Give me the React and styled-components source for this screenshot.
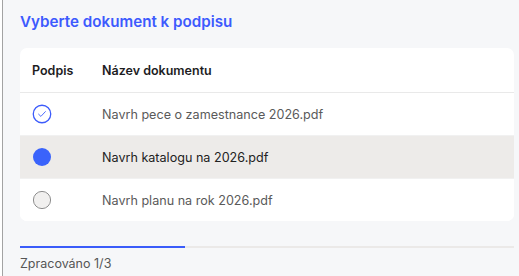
import React from 'react'
import styled, { createGlobalStyle } from 'styled-components'

const GlobalStyle = createGlobalStyle`
  html, body {
    margin: 0;
    padding: 0;
    background: #fff;
  }
  body {
    font-family: Inter, "Noto Sans", sans-serif;
  }
`

const docs = [
  { name: 'Navrh pece o zamestnance 2026.pdf', state: 'done' },
  { name: 'Navrh katalogu na 2026.pdf', state: 'active' },
  { name: 'Navrh planu na rok 2026.pdf', state: 'todo' },
]

const done = docs.filter(d => d.state === 'done').length

const StatusIcon = ({ state }) => {
  if (state === 'done') {
    return (
      <svg width="20" height="20" viewBox="0 0 20 20">
        <circle cx="10" cy="10" r="8.75" fill="#fff" stroke="#3d5cfb" strokeWidth="1.3" />
        <path d="M6.6 10.2 L8.9 12.4 L13.4 7.6" fill="none" stroke="#3d5cfb" strokeWidth="0.9" strokeLinecap="round" strokeLinejoin="round" />
      </svg>
    )
  }
  if (state === 'active') {
    return (
      <svg width="20" height="20" viewBox="0 0 20 20">
        <circle cx="10" cy="10" r="9" fill="#3a63fb" />
      </svg>
    )
  }
  return (
    <svg width="20" height="20" viewBox="0 0 20 20">
      <circle cx="10" cy="10" r="8.6" fill="#f1f0ef" stroke="#8e8e8e" strokeWidth="1" />
    </svg>
  )
}

const App = () => {
  return (
    <>
      <GlobalStyle />
      <Page>
        <Panel>
          <Title>Vyberte dokument k podpisu</Title>
          <Card>
            <HeadRow>
              <SignCol>Podpis</SignCol>
              <div>Název dokumentu</div>
            </HeadRow>
            {docs.map(d => (
              <Row key={d.name} $active={d.state === 'active'}>
                <SignCol><StatusIcon state={d.state} /></SignCol>
                <DocName $active={d.state === 'active'}>{d.name}</DocName>
              </Row>
            ))}
          </Card>
          <Progress>
            <ProgressFill style={{ width: `${(done / docs.length) * 100}%` }} />
          </Progress>
          <Status>Zpracováno {done}/{docs.length}</Status>
        </Panel>
      </Page>
    </>
  )
}

export default App

const Page = styled.div`
  display: flex;
  height: 276px;
  padding-left: 2px;
  box-sizing: border-box;
`

const Panel = styled.div`
  flex: 1;
  border-left: 1px solid #a3a3a3;
  background: #f6f7f9;
  padding: 12px 5px 0 17px;
`

const Title = styled.h1`
  margin: 0;
  font-size: 15.2px;
  line-height: 20px;
  font-weight: 600;
  color: #3d5afe;
`

const Card = styled.div`
  margin-top: 16px;
  background: #fff;
  border-radius: 7px;
  overflow: hidden;
`

const HeadRow = styled.div`
  display: flex;
  align-items: center;
  height: 44px;
  padding-left: 12px;
  border-bottom: 1px solid #e9e9e9;
  font-size: 12.5px;
  font-weight: 600;
  color: #1d1d1f;
`

const SignCol = styled.div`
  width: 70px;
  display: flex;
  align-items: center;
`

const Row = styled.div`
  display: flex;
  align-items: center;
  height: 42px;
  padding-left: 12px;
  background: ${p => (p.$active ? '#edebe9' : '#fff')};
  border-bottom: 1px solid #f1f1f1;
  &:last-child {
    border-bottom: none;
  }
`

const DocName = styled.div`
  font-size: 12.6px;
  color: ${p => (p.$active ? '#222' : '#5a5a5a')};
`

const Progress = styled.div`
  margin-top: 25px;
  height: 2px;
  background: #ebe9e8;
`

const ProgressFill = styled.div`
  height: 100%;
  background: #3a5cfa;
`

const Status = styled.div`
  margin-top: 8px;
  font-size: 12.5px;
  color: #555;
`
